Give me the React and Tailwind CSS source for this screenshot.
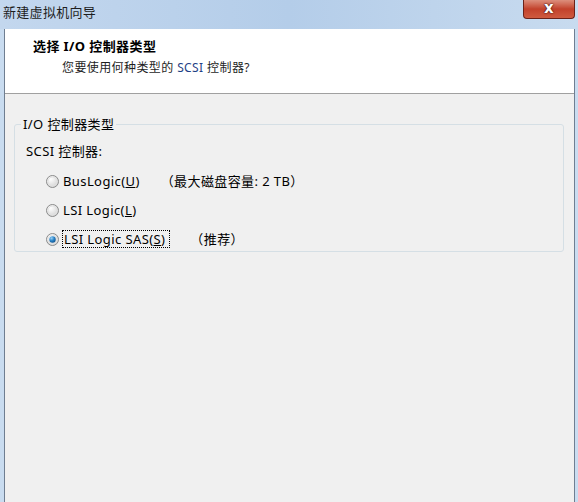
import React from "react";

const font = { fontFamily: '"Noto Sans", "Noto Sans CJK SC", sans-serif' };

function Radio({ checked }) {
  return (
    <svg width="13" height="13" viewBox="0 0 13 13" className="shrink-0">
      <defs>
        <radialGradient id={checked ? "rgc" : "rgu"} cx="0.35" cy="0.3" r="0.8">
          <stop offset="0" stopColor="#ffffff" />
          <stop offset="1" stopColor="#cfcfcf" />
        </radialGradient>
        <radialGradient id="dot" cx="0.35" cy="0.3" r="0.8">
          <stop offset="0" stopColor="#9ad0f5" />
          <stop offset="0.5" stopColor="#2a84c8" />
          <stop offset="1" stopColor="#0d4f8a" />
        </radialGradient>
      </defs>
      <circle cx="6.5" cy="6.5" r="6" fill={`url(#${checked ? "rgc" : "rgu"})`} stroke="#8a8b8b" strokeWidth="1" />
      <circle cx="6.5" cy="6.5" r="4.5" fill="none" stroke="#e2e2e2" strokeWidth="1" />
      {checked && <circle cx="6.5" cy="6.5" r="3.2" fill="url(#dot)" />}
    </svg>
  );
}

export default function App() {
  return (
    <div className="relative w-[578px] h-[502px] overflow-hidden bg-[#c9dcf0] text-[13px] tracking-[0.4px] text-black" style={font}>
      {/* title bar */}
      <div className="h-[29px] flex items-start bg-gradient-to-r from-[#c3d7ee] via-[#b4cde9] to-[#c8dbef]">
        <span className="pl-[3px] pt-[4px] text-[13px] tracking-[0.3px] leading-[17px] text-[#1e1e1e]">新建虚拟机向导</span>
      </div>
      {/* close button */}
      <div className="absolute left-[523px] top-0 w-[52px] h-[19px] rounded-b-[4px] border border-t-0 border-[#6b2219] bg-gradient-to-b from-[#dc8e7c] via-[#c2412b] to-[#cf5a3f] flex items-center justify-center">
        <span className="text-white font-bold text-[15px] leading-none -mt-[2px]" style={{ fontFamily: '"DejaVu Sans", sans-serif', textShadow: "0 0 2px #3a0c06, 0 0 1px #3a0c06" }}>x</span>
      </div>
      {/* client area */}
      <div className="absolute left-[4px] top-[29px] w-[571px] h-[473px] border-l border-r border-[#6f7e91] bg-[#f0f0f0] flex flex-col">
        <div className="h-[65px] bg-white border-b border-[#a0a0a0] flex flex-col">
          <div className="pl-[28px] pt-[9px] font-bold leading-[16px]">选择 I/O 控制器类型</div>
          <div className="pl-[57px] pt-[6px] text-[12px] tracking-[0.4px] leading-[16px] text-[#1e1e1e]">
            您要使用何种类型的 <span className="text-[#1f3f86]">SCSI</span> 控制器?
          </div>
        </div>
        <div className="pl-[9px] pt-[30px] pr-[10px]">
          <div className="relative w-[550px] h-[128px] border border-[#d5dfe5] rounded-[3px]">
            <div className="absolute left-[6px] top-[-9px] px-[2px] bg-[#f0f0f0] leading-[16px]">I/O 控制器类型</div>
            <div className="flex flex-col pl-[11px] pt-[18px]">
              <div className="leading-[16px]">SCSI 控制器:</div>
              <div className="flex flex-col gap-[11px] pt-[13px] pl-[20px]">
                <div className="flex items-center h-[18px]">
                  <Radio />
                  <span className="ml-[4px] leading-[16px]">BusLogic(<span className="underline">U</span>)</span>
                  <span className="ml-[21px] leading-[16px]">（最大磁盘容量: 2 TB）</span>
                </div>
                <div className="flex items-center h-[18px]">
                  <Radio />
                  <span className="ml-[4px] leading-[16px]">LSI Logic(<span className="underline">L</span>)</span>
                </div>
                <div className="flex items-center h-[18px]">
                  <Radio checked />
                  <span className="ml-[3px] pl-[1px] pr-[4px] leading-[16px] border border-dotted border-black">LSI Logic SAS(<span className="underline">S</span>)</span>
                  <span className="ml-[20px] leading-[16px]">（推荐）</span>
                </div>
              </div>
            </div>
          </div>
        </div>
      </div>
    </div>
  );
}
